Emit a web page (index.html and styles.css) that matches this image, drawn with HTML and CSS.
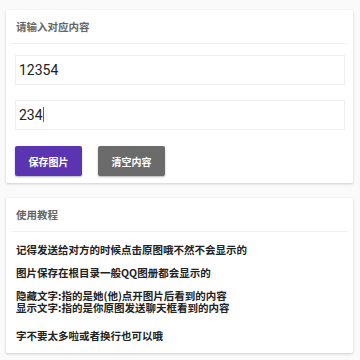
FILE: index.html
```html
<!DOCTYPE html>
<html lang="zh-CN">
<head>
    <meta charset="UTF-8">
    <meta name="viewport" content="width=device-width, initial-scale=1.0">
    <title>隐藏图片</title>
    <link rel="stylesheet" href="styles.css">
</head>
<body>
    <div class="card">
        <div class="card-head">请输入对应内容</div>
        <div class="card-body">
            <div class="field">12354</div>
            <div class="field">234<span class="caret"></span></div>
            <div class="actions">
                <button class="btn btn-save">保存图片</button>
                <button class="btn btn-clear">清空内容</button>
            </div>
        </div>
    </div>

    <div class="card">
        <div class="card-head">使用教程</div>
        <div class="card-body tips">
            <p>记得发送给对方的时候点击原图哦不然不会显示的</p>
            <p>图片保存在根目录一般QQ图册都会显示的</p>
            <p>隐藏文字:指的是她(他)点开图片后看到的内容<br>显示文字:指的是你原图发送聊天框看到的内容</p>
            <p class="last">字不要太多啦或者换行也可以哦</p>
        </div>
    </div>
</body>
</html>
```

FILE: styles.css
```css
body {
    margin: 0;
    padding: 10px 7px 0 6px;
    background-color: #fafafa;
    font-family: "Noto Sans CJK SC", "Noto Sans", sans-serif;
    color: #222;
}
.card {
    background: white;
    border-radius: 2px;
    box-shadow: 0 1px 3px rgba(0,0,0,0.18);
    margin-bottom: 15px;
}
.card-head {
    height: 33px;
    line-height: 33px;
    padding-left: 10px;
    margin: 0 5px 0 0;
    font-size: 10.5px;
    font-weight: bold;
    color: #666;
    border-bottom: 1px solid #f0f0f0;
    margin-left: 5px;
    padding-left: 5px;
}
.card-body {
    padding: 11px 8px 7px 9px;
}
.field {
    height: 28px;
    line-height: 28px;
    border: 1px solid #eee;
    padding-left: 3px;
    margin-bottom: 15px;
    font-family: Roboto, "Noto Sans", sans-serif;
    font-size: 14px;
    color: #222;
}
.caret {
    display: inline-block;
    width: 1.5px;
    height: 15px;
    background-color: #e91e63;
    vertical-align: -2px;
}
.actions {
    display: flex;
    gap: 16px;
    margin-top: 16px;
}
.btn {
    width: 67px;
    height: 30px;
    border: none;
    border-radius: 2px;
    color: white;
    font-family: "Noto Sans CJK SC", sans-serif;
    font-size: 10px;
    font-weight: bold;
    box-shadow: 0 1px 2px rgba(0,0,0,0.3);
    padding: 0;
}
.btn-save { background-color: #5b35b1; }
.btn-clear { background-color: #6b6b6b; }
.tips {
    padding: 12px 8px 11px 10px;
}
.tips p {
    margin: 0 0 11px 0;
    font-size: 10.5px;
    line-height: 12px;
    font-weight: bold;
    color: #222;
}
.tips p.last {
    margin: 16px 0 0 0;
}
```
